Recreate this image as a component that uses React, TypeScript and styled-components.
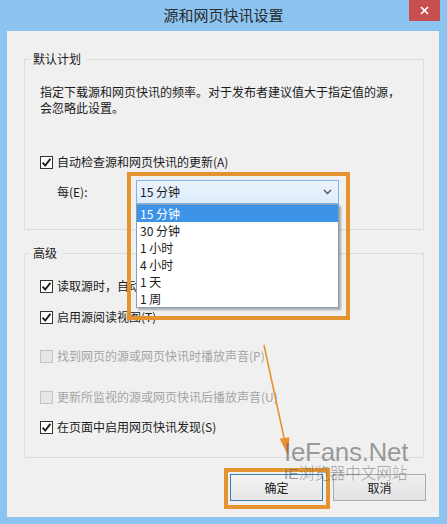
import React from "react";
import styled, { createGlobalStyle } from "styled-components";

const Global = createGlobalStyle`
  html, body { margin: 0; padding: 0; }
  body {
    width: 447px;
    height: 524px;
    overflow: hidden;
    font-family: "Noto Sans CJK SC", "Noto Sans", sans-serif;
    font-size: 12px;
    color: #1a1a1a;
  }
`;

const Window = styled.div`
  position: relative;
  width: 447px;
  height: 524px;
  box-sizing: border-box;
  background: #8cc4f1;
  display: flex;
  flex-direction: column;
`;

const TitleBar = styled.div`
  height: 31px;
  display: grid;
  grid-template-columns: 1fr auto 1fr;
  align-items: start;
`;

const Title = styled.div`
  grid-column: 2;
  height: 31px;
  line-height: 30px;
  font-size: 15px;
  color: #2a2a2a;
  letter-spacing: 0;
`;

const CloseButton = styled.div`
  grid-column: 3;
  justify-self: end;
  margin-right: 7px;
  width: 31px;
  height: 21px;
  background: #c74f4f;
  display: flex;
  align-items: center;
  justify-content: center;
`;

const Client = styled.div`
  flex: 1;
  margin: 0 8px 7px 7px;
  background: #f0f0f0;
  box-sizing: border-box;
  padding: 20px 15px 16px 17px;
  display: flex;
  flex-direction: column;
`;

const GroupBox = styled.section<{ $top?: number }>`
  display: flex;
  flex-direction: column;
  margin-top: ${(p) => p.$top ?? 0}px;
`;

const GroupHeader = styled.div`
  display: flex;
  height: 16px;
  line-height: 16px;
  &::before {
    content: "";
    width: 6px;
    height: 8px;
    align-self: flex-end;
    border-top: 1px solid #dcdcdc;
    border-left: 1px solid #dcdcdc;
    box-sizing: border-box;
  }
  &::after {
    content: "";
    flex: 1;
    height: 8px;
    align-self: flex-end;
    border-top: 1px solid #dcdcdc;
    border-right: 1px solid #dcdcdc;
    box-sizing: border-box;
  }
`;

const GroupTitle = styled.span`
  padding: 0 5px 0 3px;
  color: #1a1a1a;
`;

const GroupBody = styled.div<{ $bottom: number }>`
  border: 1px solid #dcdcdc;
  border-top: none;
  padding: 17px 15px ${(p) => p.$bottom}px 15px;
  display: flex;
  flex-direction: column;
`;

const Description = styled.p`
  margin: 0;
  line-height: 16px;
`;

const CheckRow = styled.label<{ $top?: number; $disabled?: boolean }>`
  display: flex;
  align-items: center;
  gap: 4px;
  height: 16px;
  line-height: 16px;
  margin-top: ${(p) => p.$top ?? 0}px;
  color: ${(p) => (p.$disabled ? "#a4a4a4" : "#1a1a1a")};
  white-space: nowrap;
`;

const Box = styled.span<{ $disabled?: boolean }>`
  width: 13px;
  height: 13px;
  box-sizing: border-box;
  border: 1px solid ${(p) => (p.$disabled ? "#c4c4c4" : "#333")};
  background: ${(p) => (p.$disabled ? "#e6e6e6" : "#fff")};
  display: flex;
  align-items: center;
  justify-content: center;
  flex: none;
`;

const ComboRow = styled.div`
  display: flex;
  align-items: center;
  margin-top: 10px;
  padding-left: 17px;
`;

const ComboLabel = styled.span`
  width: 79px;
  line-height: 16px;
`;

const Combo = styled.div`
  position: relative;
  width: 203px;
  height: 24px;
  box-sizing: border-box;
  border: 1px solid #7eb4ea;
  background: linear-gradient(#ecf4fc, #dcecfc);
  display: flex;
  align-items: center;
  justify-content: space-between;
  padding: 0 6px 0 3px;
  line-height: 16px;
  z-index: 3;
`;

const List = styled.ul`
  position: absolute;
  left: -1px;
  top: 23px;
  width: 203px;
  margin: 0;
  padding: 0;
  list-style: none;
  background: #fff;
  border: 1px solid #8a9db3;
  box-sizing: border-box;
  box-shadow: 2px 2px 2px rgba(0, 0, 0, 0.3);
`;

const Item = styled.li<{ $selected?: boolean }>`
  height: 17px;
  line-height: 17px;
  padding-left: 3px;
  background: ${(p) => (p.$selected ? "#3d93e8" : "transparent")};
  color: ${(p) => (p.$selected ? "#fff" : "#1a1a1a")};
`;

const Highlight = styled.div<{ $l: number; $t: number; $w: number; $h: number }>`
  position: absolute;
  left: ${(p) => p.$l}px;
  top: ${(p) => p.$t}px;
  width: ${(p) => p.$w}px;
  height: ${(p) => p.$h}px;
  box-sizing: border-box;
  border: 4px solid #e5932f;
  pointer-events: none;
  z-index: 4;
`;

const ButtonRow = styled.div`
  display: flex;
  justify-content: flex-end;
  gap: 10px;
  margin-top: 16px;
  margin-right: -2px;
`;

const Button = styled.div<{ $primary?: boolean }>`
  position: relative;
  width: 93px;
  height: 27px;
  box-sizing: border-box;
  border: 1px solid ${(p) => (p.$primary ? "#3c7fb1" : "#acacac")};
  background: ${(p) =>
    p.$primary ? "linear-gradient(#f2f2f2, #e6e6e6)" : "linear-gradient(#efefef, #e3e3e3)"};
  display: flex;
  align-items: center;
  justify-content: center;
  line-height: 16px;
  color: #1a1a1a;
`;

const Overlay = styled.svg`
  position: absolute;
  left: 0;
  top: 0;
  pointer-events: none;
  z-index: 5;
`;

const Watermark = styled.div`
  position: absolute;
  left: 284px;
  top: 439px;
  display: flex;
  flex-direction: column;
  align-items: flex-start;
  color: rgba(95, 95, 95, 0.6);
  pointer-events: none;
  z-index: 6;
`;

const WatermarkBig = styled.span`
  font-family: "Liberation Sans", Arial, sans-serif;
  font-size: 26px;
  line-height: 26px;
  letter-spacing: -0.3px;
`;

const WatermarkSmall = styled.span`
  font-family: "Liberation Sans", "Noto Sans CJK SC", sans-serif;
  font-size: 15.5px;
  line-height: 18px;
  margin-top: 0px;
  font-weight: 300;
`;

const Check = () => (
  <svg width="11" height="11" viewBox="0 0 11 11">
    <path d="M1.6 5.6 L4.2 8.6 L9.4 1.8" fill="none" stroke="#1f1f1f" strokeWidth="1.9" />
  </svg>
);

const CheckBox = ({
  checked,
  disabled,
  top,
  children,
}: {
  checked?: boolean;
  disabled?: boolean;
  top?: number;
  children: React.ReactNode;
}) => (
  <CheckRow $top={top} $disabled={disabled}>
    <Box $disabled={disabled}>{checked && <Check />}</Box>
    <span>{children}</span>
  </CheckRow>
);

const options = ["15 分钟", "30 分钟", "1 小时", "4 小时", "1 天", "1 周"];

export default function App() {
  return (
    <>
      <Global />
      <Window>
        <TitleBar>
          <Title>源和网页快讯设置</Title>
          <CloseButton>
            <svg width="9" height="9" viewBox="0 0 9 9">
              <path d="M1 1 L8 8 M8 1 L1 8" stroke="#fff" strokeWidth="1.7" />
            </svg>
          </CloseButton>
        </TitleBar>
        <Client>
          <GroupBox>
            <GroupHeader>
              <GroupTitle>默认计划</GroupTitle>
            </GroupHeader>
            <GroupBody $bottom={25}>
              <Description>
                指定下载源和网页快讯的频率。对于发布者建议值大于指定值的源，
                <br />
                会忽略此设置。
              </Description>
              <CheckBox checked top={38}>
                自动检查源和网页快讯的更新(A)
              </CheckBox>
              <ComboRow>
                <ComboLabel>每(E):</ComboLabel>
                <Combo>
                  <span>15 分钟</span>
                  <svg width="9" height="6" viewBox="0 0 9 6">
                    <path d="M1 1 L4.5 4.5 L8 1" fill="none" stroke="#555" strokeWidth="1.4" />
                  </svg>
                  <List>
                    {options.map((o, i) => (
                      <Item key={o} $selected={i === 0}>
                        {o}
                      </Item>
                    ))}
                  </List>
                  <Highlight $l={-10} $t={-9} $w={223} $h={148} />
                </Combo>
              </ComboRow>
            </GroupBody>
          </GroupBox>
          <GroupBox $top={15}>
            <GroupHeader>
              <GroupTitle>高级</GroupTitle>
            </GroupHeader>
            <GroupBody $bottom={22}>
              <CheckBox checked>读取源时，自动将源标记为已读(M)</CheckBox>
              <CheckBox checked top={15}>
                启用源阅读视图(T)
              </CheckBox>
              <CheckBox disabled top={23}>
                找到网页的源或网页快讯时播放声音(P)
              </CheckBox>
              <CheckBox disabled top={25}>
                更新所监视的源或网页快讯后播放声音(U)
              </CheckBox>
              <CheckBox checked top={14}>
                在页面中启用网页快讯发现(S)
              </CheckBox>
            </GroupBody>
          </GroupBox>
          <ButtonRow>
            <Button $primary>
              确定
              <Highlight $l={-7} $t={-7} $w={106} $h={41} />
            </Button>
            <Button>取消</Button>
          </ButtonRow>
        </Client>
        <Overlay width="447" height="524" viewBox="0 0 447 524">
          <line x1="264" y1="345" x2="284.5" y2="440" stroke="#e8912d" strokeWidth="1.6" />
          <polygon points="288,455 279.6,438.8 289.4,437.2" fill="#e8912d" />
        </Overlay>
        <Watermark>
          <WatermarkBig>IeFans.Net</WatermarkBig>
          <WatermarkSmall>IE浏览器中文网站</WatermarkSmall>
        </Watermark>
      </Window>
    </>
  );
}
